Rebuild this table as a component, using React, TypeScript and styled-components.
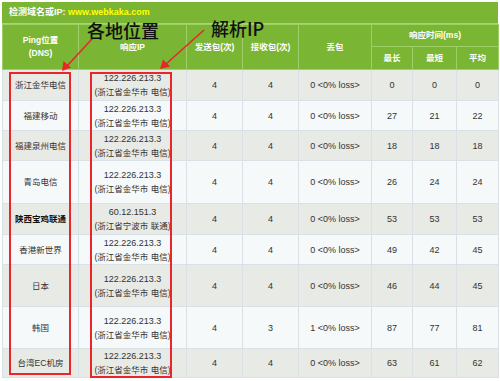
import React from 'react'
import styled, { createGlobalStyle } from 'styled-components'

const GlobalStyle = createGlobalStyle`
  body {
    margin: 0;
    background: #fff;
    font-family: "Liberation Sans", "Noto Sans CJK SC", sans-serif;
  }
`

const GREEN = '#7ab533'
const RED = '#e8262c'

interface Row {
  place: string
  ip: string
  loc: string
  sent: number
  recv: number
  lost: number
  max: number
  min: number
  avg: number
  h: number
  strong?: boolean
}

const rows: Row[] = [
  { place: '浙江金华电信', ip: '122.226.213.3', loc: '(浙江省金华市 电信)', sent: 4, recv: 4, lost: 0, max: 0, min: 0, avg: 0, h: 31 },
  { place: '福建移动', ip: '122.226.213.3', loc: '(浙江省金华市 电信)', sent: 4, recv: 4, lost: 0, max: 27, min: 21, avg: 22, h: 30 },
  { place: '福建泉州电信', ip: '122.226.213.3', loc: '(浙江省金华市 电信)', sent: 4, recv: 4, lost: 0, max: 18, min: 18, avg: 18, h: 30 },
  { place: '青岛电信', ip: '122.226.213.3', loc: '(浙江省金华市 电信)', sent: 4, recv: 4, lost: 0, max: 26, min: 24, avg: 24, h: 43 },
  { place: '陕西宝鸡联通', ip: '60.12.151.3', loc: '(浙江省宁波市 联通)', sent: 4, recv: 4, lost: 0, max: 53, min: 53, avg: 53, h: 31, strong: true },
  { place: '香港新世界', ip: '122.226.213.3', loc: '(浙江省金华市 电信)', sent: 4, recv: 4, lost: 0, max: 49, min: 42, avg: 45, h: 30 },
  { place: '日本', ip: '122.226.213.3', loc: '(浙江省金华市 电信)', sent: 4, recv: 4, lost: 0, max: 46, min: 44, avg: 45, h: 42 },
  { place: '韩国', ip: '122.226.213.3', loc: '(浙江省金华市 电信)', sent: 4, recv: 3, lost: 1, max: 87, min: 77, avg: 81, h: 42 },
  { place: '台湾EC机房', ip: '122.226.213.3', loc: '(浙江省金华市 电信)', sent: 4, recv: 4, lost: 0, max: 63, min: 61, avg: 62, h: 29 },
]

const Frame = styled.div`
  position: relative;
  width: 496px;
  padding: 2px 2px 0 2px;
`

const TitleBar = styled.div`
  height: 21px;
  line-height: 21px;
  padding-left: 7px;
  background: ${GREEN};
  color: #fff;
  font-size: 9px;
  font-weight: bold;
  border-bottom: 1px solid #a6d472;
`

const Url = styled.span`
  color: #ffff00;
`

const Table = styled.table`
  width: 496px;
  border-collapse: collapse;
  table-layout: fixed;
  font-size: 8.5px;
  color: #333;
`

const Th = styled.th`
  background: ${GREEN};
  color: #fff;
  font-weight: bold;
  font-size: 8.5px;
  line-height: 13px;
  border: 1px solid #9fcf68;
  text-align: center;
  padding: 0;
`

const Tr = styled.tr<{ $h: number; $alt: boolean }>`
  height: ${p => p.$h}px;
  background: ${p => (p.$alt ? '#f5f9f9' : '#e8eae5')};
`

const Td = styled.td<{ $strong?: boolean }>`
  border: 1px solid #d9e0e6;
  text-align: center;
  padding: 0;
  line-height: 14px;
  white-space: nowrap;
  font-weight: ${p => (p.$strong ? 'bold' : 'normal')};
  color: ${p => (p.$strong ? '#111' : '#333')};
`

const Num = styled.span`
  font-size: 9px;
`

const Note = styled.div<{ $x: number; $y: number }>`
  position: absolute;
  left: ${p => p.$x}px;
  top: ${p => p.$y}px;
  font-family: "Noto Sans CJK SC", sans-serif;
  font-size: 18px;
  line-height: 18px;
  font-weight: 500;
  color: #111;
  white-space: nowrap;
`

const Mark = styled.div<{ $x: number; $y: number; $w: number; $h: number }>`
  position: absolute;
  left: ${p => p.$x}px;
  top: ${p => p.$y}px;
  width: ${p => p.$w}px;
  height: ${p => p.$h}px;
  border: 2px solid ${RED};
  box-sizing: border-box;
  pointer-events: none;
`

const Arrows = styled.svg`
  position: absolute;
  left: 0;
  top: 0;
  pointer-events: none;
`

const widths = [76, 108, 56, 56, 73, 41, 44, 42]

export default function App() {
  return (
    <>
      <GlobalStyle />
      <Frame>
        <TitleBar>
          检测域名或IP: <Url>www.webkaka.com</Url>
        </TitleBar>
        <Table>
          <colgroup>
            {widths.map((w, i) => (
              <col key={i} style={{ width: w }} />
            ))}
          </colgroup>
          <thead>
            <tr style={{ height: 22 }}>
              <Th rowSpan={2}>
                Ping位置
                <br />
                (DNS)
              </Th>
              <Th rowSpan={2}>响应IP</Th>
              <Th rowSpan={2}>发送包(次)</Th>
              <Th rowSpan={2}>接收包(次)</Th>
              <Th rowSpan={2}>丢包</Th>
              <Th colSpan={3}>响应时间(ms)</Th>
            </tr>
            <tr style={{ height: 23 }}>
              <Th>最长</Th>
              <Th>最短</Th>
              <Th>平均</Th>
            </tr>
          </thead>
          <tbody>
            {rows.map((r, i) => (
              <Tr key={i} $h={r.h} $alt={i % 2 === 1}>
                <Td $strong={r.strong}>{r.place}</Td>
                <Td>
                  <Num>{r.ip}</Num>
                  <br />
                  {r.loc}
                </Td>
                <Td><Num>{r.sent}</Num></Td>
                <Td><Num>{r.recv}</Num></Td>
                <Td><Num>{r.lost} &lt;0% loss&gt;</Num></Td>
                <Td><Num>{r.max}</Num></Td>
                <Td><Num>{r.min}</Num></Td>
                <Td><Num>{r.avg}</Num></Td>
              </Tr>
            ))}
          </tbody>
        </Table>

        <Mark $x={9} $y={72} $w={62} $h={303} />
        <Mark $x={90} $y={72} $w={82} $h={306} />
        <Note $x={87} $y={21}>各地位置</Note>
        <Note $x={211} $y={19}>解析IP</Note>
        <Arrows width={500} height={100} viewBox="0 0 500 100">
          <line x1={92} y1={39} x2={67} y2={66} stroke={RED} strokeWidth={1.5} />
          <polygon points="62,71 63.5,61 71,67.5" fill={RED} />
          <line x1={204} y1={30} x2={166} y2={64} stroke={RED} strokeWidth={1.5} />
          <polygon points="160,69 163,59.5 170,66.5" fill={RED} />
        </Arrows>
      </Frame>
    </>
  )
}
